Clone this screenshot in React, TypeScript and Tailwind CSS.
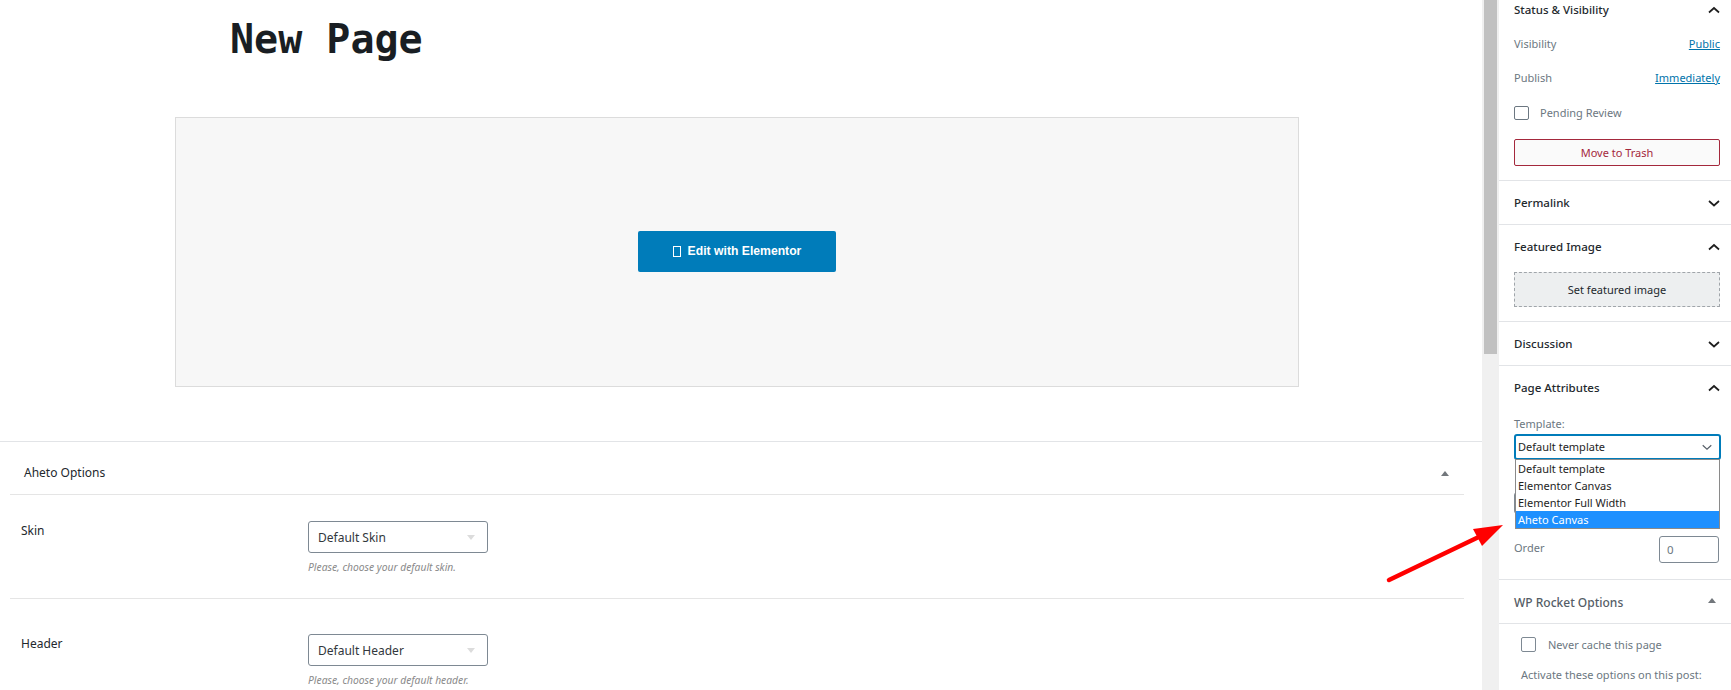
import React from "react";

const F = "font-['Noto_Sans',sans-serif]";

function Chevron({ up, className = "", color = "#1e1e1e", sw = 1.7 }: { up?: boolean; className?: string; color?: string; sw?: number }) {
  return (
    <svg width="14" height="14" viewBox="0 0 14 14" className={className} fill="none" stroke={color} strokeWidth={sw}>
      <path d={up ? "M2 9.5 L7 5 L12 9.5" : "M2 5 L7 9.5 L12 5"} />
    </svg>
  );
}

function Tri({ up, color }: { up?: boolean; color: string }) {
  return (
    <svg width="8" height="5" viewBox="0 0 8 5" fill={color}>
      <path d={up ? "M4 0 L8 5 L0 5 Z" : "M0 0 L8 0 L4 5 Z"} />
    </svg>
  );
}

function PanelHead({ title, up }: { title: string; up?: boolean }) {
  return (
    <div className="flex items-center justify-between h-[40px] mr-[-1px]">
      <span className="text-[11.5px] font-medium text-[#23282d]">{title}</span>
      <Chevron up={up} />
    </div>
  );
}

function Option({ label, select, hint, divided }: { label: string; select: string; hint: string; divided?: boolean }) {
  return (
    <div className={`flex ml-[10px] mr-[18px] ${divided ? "border-b border-[#e5e5e5] h-[104px] pt-[26px]" : "pt-[35px]"}`}>
      <div className="w-[298px] pl-[11px] pt-[1px] text-[12px] text-[#23282d] leading-[18px]">{label}</div>
      <div>
        <div className="w-[180px] h-[32px] border border-[#7e8993] rounded-[3px] flex items-center justify-between pl-[9px] pr-[12px] pt-[1px] text-[12px] text-[#32373c]">
          <span>{select}</span>
          <Tri color="#dcdcdc" />
        </div>
        <div className="mt-[7px] text-[10.3px] italic text-[#8a8a8a] leading-[14px]">{hint}</div>
      </div>
    </div>
  );
}

export default function App() {
  return (
    <div className={`relative flex h-[690px] w-[1731px] overflow-hidden bg-white ${F}`}>
      <main className="w-[1482px] shrink-0">
        <div className="h-[117px] pl-[230px] pt-[13px]">
          <h1 className="font-['DejaVu_Sans_Mono',monospace] font-bold text-[40px] leading-[52px] text-[#191e23]">New Page</h1>
        </div>
        <div className="ml-[175px] w-[1124px] h-[270px] bg-[#f7f7f7] border border-[#dcdcdc] flex items-center justify-center">
          <button className="w-[198px] h-[41px] mt-[-1px] pb-[1px] bg-[#007cba] rounded-[2px] text-white text-[12.2px] font-bold font-['Liberation_Sans',sans-serif] flex items-center justify-center gap-[7px]">
            <span className="w-[8px] h-[11px] border border-white inline-block" />
            Edit with Elementor
          </button>
        </div>
        <div className="mt-[54px] border-t border-[#e2e4e7]">
          <div className="ml-[10px] mr-[18px] h-[53px] pt-[10px] border-b border-[#e5e5e5] flex items-center justify-between pl-[14px] pr-[15px]">
            <span className="text-[12px] text-[#23282d]">Aheto Options</span>
            <Tri up color="#72777c" />
          </div>
          <Option label="Skin" select="Default Skin" hint="Please, choose your default skin." divided />
          <Option label="Header" select="Default Header" hint="Please, choose your default header." />
        </div>
      </main>

      <div className="w-[17px] shrink-0 bg-[#f0f0f0] pl-[2px]">
        <div className="w-[13px] h-[354px] bg-[#c1c1c1]" />
      </div>

      <aside className="flex-1 min-w-0 text-[11px]">
        <div className="h-[181px] border-b border-[#e2e4e7] pl-[15px] pr-[11px]">
          <div className="flex items-center justify-between h-[20px] mr-[-1px]">
            <span className="text-[11.5px] font-medium text-[#23282d]">Status &amp; Visibility</span>
            <Chevron up />
          </div>
          <div className="flex justify-between mt-[14px] h-[20px] items-center text-[#6c7781]">
            <span>Visibility</span>
            <span className="text-[#0073aa] underline">Public</span>
          </div>
          <div className="flex justify-between mt-[14px] h-[20px] items-center text-[#6c7781]">
            <span>Publish</span>
            <span className="text-[#0073aa] underline">Immediately</span>
          </div>
          <div className="flex items-center mt-[15px] h-[20px] text-[#6c7781]">
            <span className="w-[15px] h-[14px] border-[1.5px] border-[#6c7781] rounded-[2px] mr-[11px]" />
            Pending Review
          </div>
          <div className="mt-[16px] h-[27px] pt-[1px] border border-[#a4283c] rounded-[2px] flex items-center justify-center text-[#a4283c] bg-[#fafafa]">Move to Trash</div>
        </div>

        <div className="h-[44px] border-b border-[#e2e4e7] pl-[15px] pr-[11px] flex items-center">
          <div className="flex-1"><PanelHead title="Permalink" /></div>
        </div>

        <div className="h-[97px] border-b border-[#e2e4e7] pl-[15px] pr-[11px] pt-[2px]">
          <PanelHead title="Featured Image" up />
          <div className="mt-[5px] h-[35px] pt-[2px] border border-dashed border-[#a0a5aa] bg-[#edeff0] flex items-center justify-center text-[#23282d]">Set featured image</div>
        </div>

        <div className="h-[44px] border-b border-[#e2e4e7] pl-[15px] pr-[11px] flex items-center">
          <div className="flex-1"><PanelHead title="Discussion" /></div>
        </div>

        <div className="relative h-[214px] border-b border-[#e2e4e7] pl-[15px] pr-[11px]">
          <div className="pt-[2px]"><PanelHead title="Page Attributes" up /></div>
          <div className="mt-[8px] text-[#6c7781] leading-[16px]">Template:</div>
          <div className="relative mt-[2px] w-[207px] h-[26px] border-2 border-[#007cba] rounded-[3px] flex items-center justify-between pl-[2px] pr-[6px] text-[11px] text-[#1e1e1e]">
            <span>Default template</span>
            <Chevron className="w-[12px] h-[12px]" color="#555d66" sw={1.3} />
          </div>
          <div className="absolute left-[16px] top-[93px] w-[205px] z-10 bg-white border border-[#8a8a8a] text-[11px] leading-[17px] text-[#1e1e1e]">
            <div className="pl-[2px]">Default template</div>
            <div className="pl-[2px]">Elementor Canvas</div>
            <div className="pl-[2px]">Elementor Full Width</div>
            <div className="pl-[2px] bg-[#1e90ff] text-white">Aheto Canvas</div>
          </div>
          <div className="absolute left-[15px] top-[126px] w-[206px] h-[22px] border border-[#7e8993] rounded-[3px]" />
          <div className="absolute left-[15px] right-[11px] top-[170px] flex items-center justify-between">
            <span className="text-[#6c7781] mt-[-3px]">Order</span>
            <span className="w-[60px] h-[27px] border border-[#7e8993] rounded-[3px] flex items-center pl-[7px] text-[11.5px] text-[#6c7781] mr-[1px]">0</span>
          </div>
        </div>

        <div className="h-[44px] border-b border-[#e2e4e7] pl-[15px] pr-[15px] pt-[3px] flex items-center justify-between">
          <span className="text-[12px] font-medium text-[#555d66]">WP Rocket Options</span>
          <span className="mt-[-6px] flex"><Tri up color="#72777c" /></span>
        </div>

        <div className="pl-[22px] pt-[12px] text-[11px] text-[#6c7781]">
          <div className="flex items-center h-[16px]">
            <span className="w-[15px] h-[15px] border border-[#7e8993] rounded-[2px] mr-[12px]" />
            <span className="pt-[3px]">Never cache this page</span>
          </div>
          <div className="mt-[15px]">Activate these options on this post:</div>
        </div>
      </aside>

      <svg className="absolute left-[1385px] top-[520px]" width="125" height="65" viewBox="0 0 125 65">
        <path d="M4 60 L100 14" stroke="#f00" strokeWidth="4.5" strokeLinecap="round" fill="none" />
        <path d="M118 5 L88 9 L97 26 Z" fill="#f00" />
      </svg>
    </div>
  );
}
